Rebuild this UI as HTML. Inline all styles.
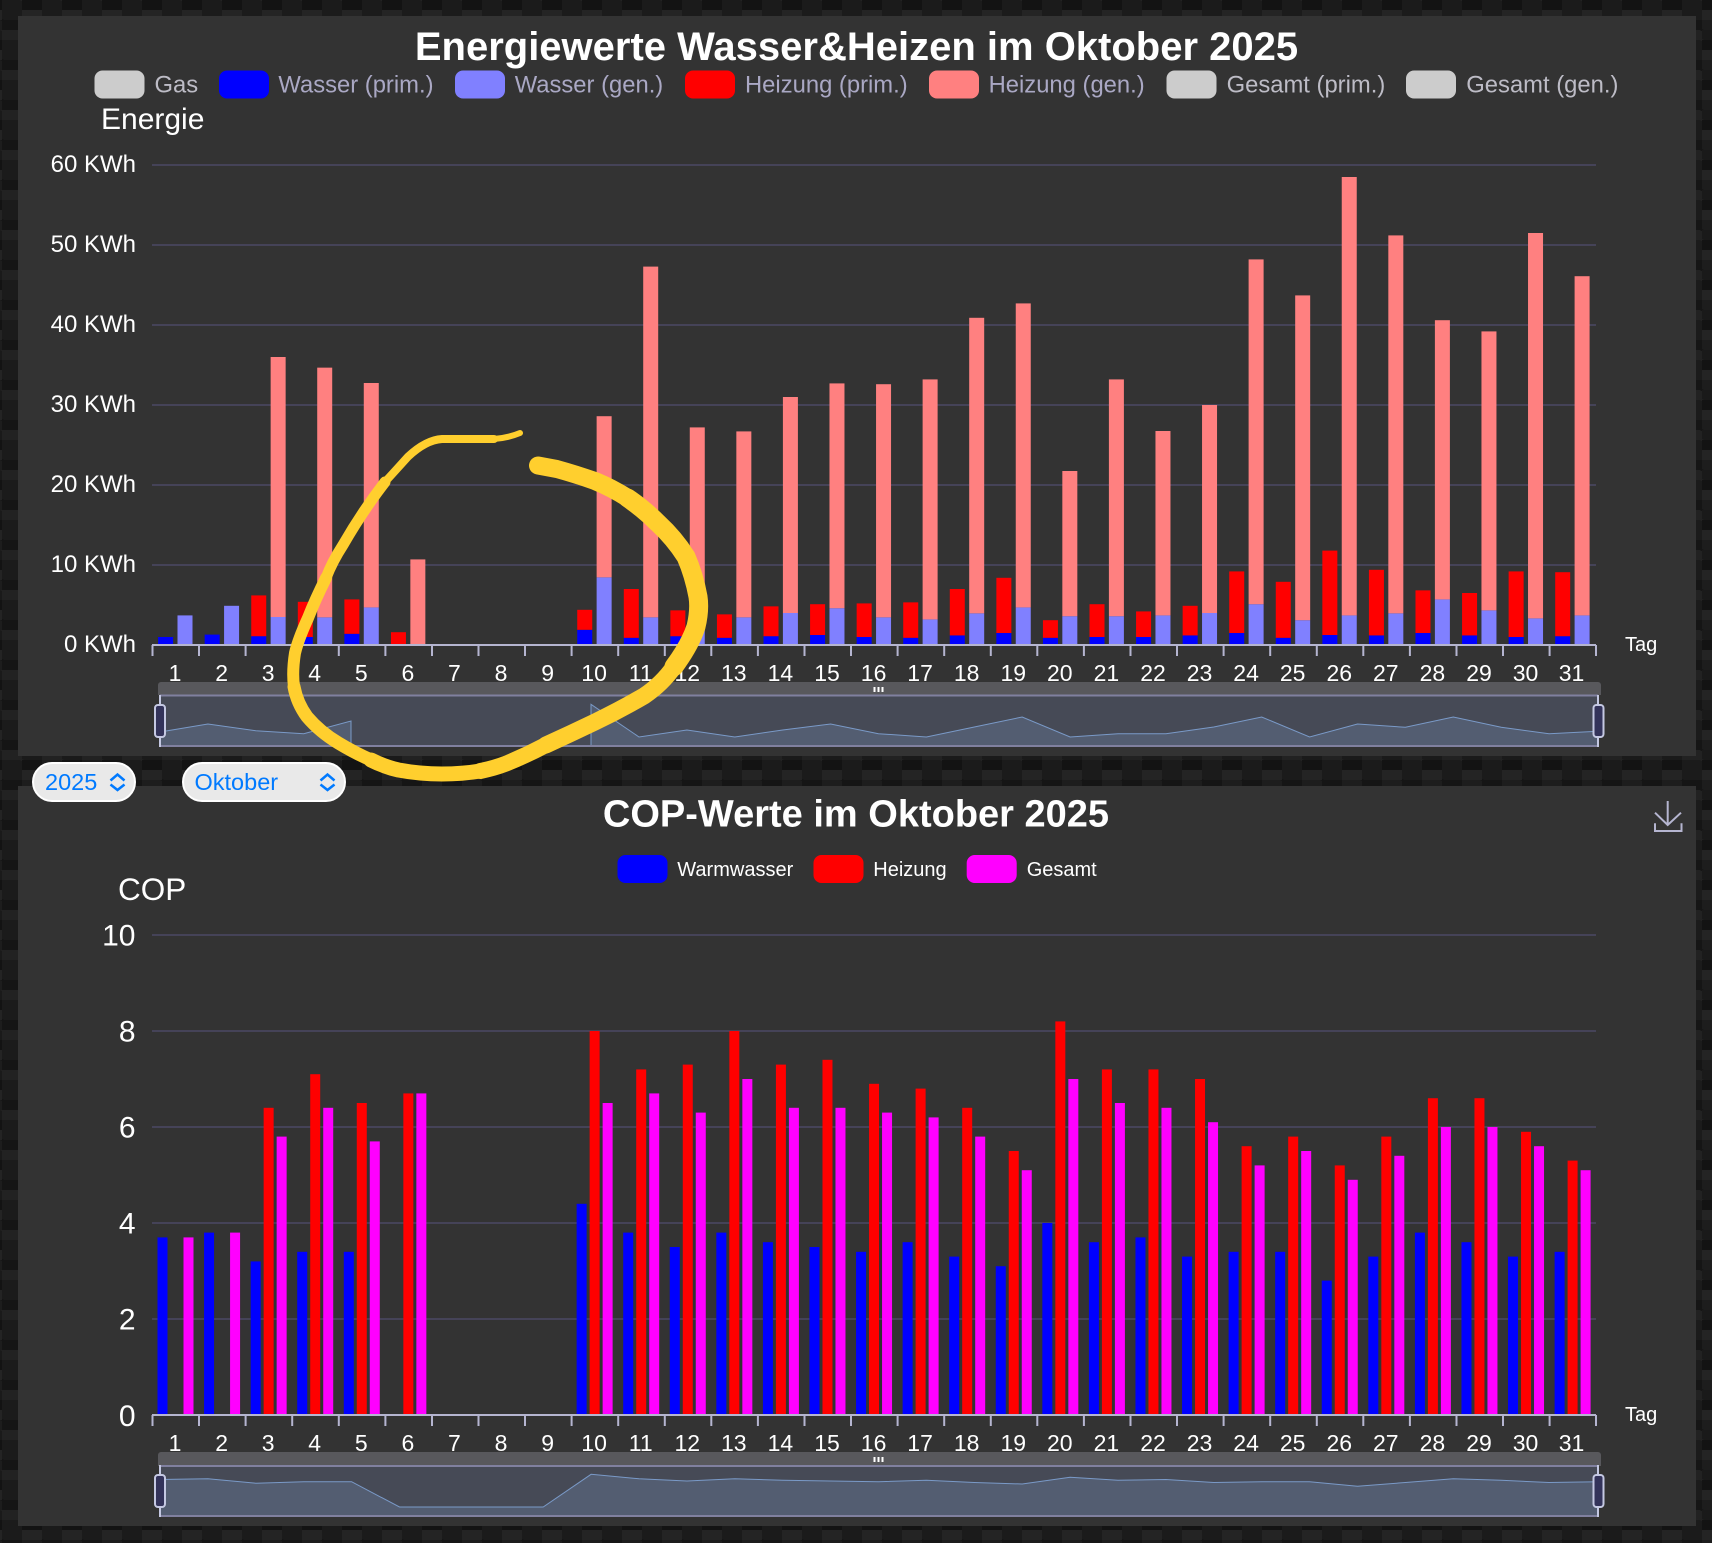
<!DOCTYPE html>
<html><head><meta charset="utf-8"><title>Energiewerte</title>
<style>
html,body{margin:0;padding:0;width:1712px;height:1543px;overflow:hidden}
body{background:
linear-gradient(27deg,#151515 10px,transparent 10px) 2px 30px,
linear-gradient(207deg,#151515 10px,transparent 10px) 22px 20px,
linear-gradient(27deg,#222 10px,transparent 10px) 2px 40px,
linear-gradient(207deg,#222 10px,transparent 10px) 22px 30px,
linear-gradient(90deg,#1b1b1b 20px,transparent 20px) 2px 20px,
linear-gradient(#1d1d1d 25%,#1a1a1a 25%,#1a1a1a 50%,transparent 50%,transparent 75%,#242424 75%,#242424) 2px 20px;
background-color:#131313;background-size:40px 40px}
svg{position:absolute;left:0;top:0;display:block}
text{font-family:"Liberation Sans",sans-serif;fill:#fff}
.a{x:5.6px;width:15px}.c{x:25px;width:15px}
.b{fill:#00f}.e{fill:#f00}.f{fill:#8080ff}.g{fill:#ff8080}
.p{x:5px;width:10px;fill:#00f}.q{x:18px;width:10px;fill:#f00}.t{x:31px;width:10px;fill:#f0f}
.grid{stroke:#454358;stroke-width:2;fill:none}
.axis{stroke:#b5b5d0;stroke-width:2;fill:none}
.lg{font-size:23.8px;fill:#aaa8c4}
.lw{font-size:23.8px;fill:#bdbcc6}
.yl{font-size:24px;text-anchor:end}
.yc{font-size:30px;text-anchor:end}
.xl text{font-size:23px;text-anchor:middle}
.sel{font-size:23.5px;fill:#007aff}
.chev{fill:none;stroke:#007aff;stroke-width:2.5}
.sc{fill:none;stroke:#ffcf2e;stroke-linecap:round;stroke-linejoin:round}
</style></head><body>
<svg width="1712" height="1543" viewBox="0 0 1712 1543" xmlns="http://www.w3.org/2000/svg">
<rect x="18" y="16" width="1678" height="740" fill="#333"/>
<rect x="18" y="786" width="1678" height="740" fill="#333"/>

<text x="856.5" y="60" font-size="40" font-weight="bold" text-anchor="middle">Energiewerte Wasser&amp;Heizen im Oktober 2025</text>
<rect x="94.5" y="70.5" width="50" height="28" rx="8" fill="#ccc"/><text class="lw" x="154.5" y="92.5">Gas</text>
<rect x="219" y="70.5" width="50" height="28" rx="8" fill="#00f"/><text class="lg" x="278.4" y="92.5">Wasser (prim.)</text>
<rect x="455" y="70.5" width="50" height="28" rx="8" fill="#8080ff"/><text class="lg" x="514.7" y="92.5">Wasser (gen.)</text>
<rect x="685" y="70.5" width="50" height="28" rx="8" fill="#f00"/><text class="lg" x="745" y="92.5">Heizung (prim.)</text>
<rect x="929" y="70.5" width="50" height="28" rx="8" fill="#ff8080"/><text class="lg" x="988.6" y="92.5">Heizung (gen.)</text>
<rect x="1166.5" y="70.5" width="50" height="28" rx="8" fill="#ccc"/><text class="lw" x="1226.6" y="92.5">Gesamt (prim.)</text>
<rect x="1406" y="70.5" width="50" height="28" rx="8" fill="#ccc"/><text class="lw" x="1466.3" y="92.5">Gesamt (gen.)</text>
<text x="101" y="129" font-size="30">Energie</text>

<path class="grid" d="M152 165H1596M152 245H1596M152 325H1596M152 405H1596M152 485H1596M152 565H1596"/>
<text class="yl" x="136" y="172">60 KWh</text>
<text class="yl" x="136" y="252">50 KWh</text>
<text class="yl" x="136" y="332">40 KWh</text>
<text class="yl" x="136" y="412">30 KWh</text>
<text class="yl" x="136" y="492">20 KWh</text>
<text class="yl" x="136" y="572">10 KWh</text>
<text class="yl" x="136" y="652">0 KWh</text>

<g transform="translate(0,645) scale(1,-8)">
<g transform="translate(152.5)"><rect class="a b" height="1"/><rect class="c f" height="3.7"/></g>
<g transform="translate(199.07)"><rect class="a b" height="1.3"/><rect class="c f" height="4.9"/></g>
<g transform="translate(245.64)"><rect class="a b" height="1.1"/><rect class="a e" y="1.1" height="5.1"/><rect class="c f" height="3.5"/><rect class="c g" y="3.5" height="32.5"/></g>
<g transform="translate(292.21)"><rect class="a b" height="1"/><rect class="a e" y="1" height="4.4"/><rect class="c f" height="3.46"/><rect class="c g" y="3.46" height="31.21"/></g>
<g transform="translate(338.78)"><rect class="a b" height="1.4"/><rect class="a e" y="1.4" height="4.3"/><rect class="c f" height="4.7"/><rect class="c g" y="4.7" height="28.05"/></g>
<g transform="translate(385.35)"><rect class="a e" height="1.6"/><rect class="c g" height="10.7"/></g>
<g transform="translate(571.63)"><rect class="a b" height="1.9"/><rect class="a e" y="1.9" height="2.5"/><rect class="c f" height="8.46"/><rect class="c g" y="8.46" height="20.14"/></g>
<g transform="translate(618.2)"><rect class="a b" height=".9"/><rect class="a e" y=".9" height="6.1"/><rect class="c f" height="3.46"/><rect class="c g" y="3.46" height="43.84"/></g>
<g transform="translate(664.77)"><rect class="a b" height="1.1"/><rect class="a e" y="1.1" height="3.23"/><rect class="c f" height="3.8"/><rect class="c g" y="3.8" height="23.4"/></g>
<g transform="translate(711.34)"><rect class="a b" height=".9"/><rect class="a e" y=".9" height="2.93"/><rect class="c f" height="3.46"/><rect class="c g" y="3.46" height="23.24"/></g>
<g transform="translate(757.91)"><rect class="a b" height="1.1"/><rect class="a e" y="1.1" height="3.73"/><rect class="c f" height="4"/><rect class="c g" y="4" height="27"/></g>
<g transform="translate(804.48)"><rect class="a b" height="1.25"/><rect class="a e" y="1.25" height="3.85"/><rect class="c f" height="4.6"/><rect class="c g" y="4.6" height="28.1"/></g>
<g transform="translate(851.05)"><rect class="a b" height="1"/><rect class="a e" y="1" height="4.2"/><rect class="c f" height="3.46"/><rect class="c g" y="3.46" height="29.14"/></g>
<g transform="translate(897.62)"><rect class="a b" height=".9"/><rect class="a e" y=".9" height="4.43"/><rect class="c f" height="3.2"/><rect class="c g" y="3.2" height="30"/></g>
<g transform="translate(944.19)"><rect class="a b" height="1.2"/><rect class="a e" y="1.2" height="5.8"/><rect class="c f" height="3.96"/><rect class="c g" y="3.96" height="36.94"/></g>
<g transform="translate(990.76)"><rect class="a b" height="1.5"/><rect class="a e" y="1.5" height="6.9"/><rect class="c f" height="4.7"/><rect class="c g" y="4.7" height="38"/></g>
<g transform="translate(1037.33)"><rect class="a b" height=".9"/><rect class="a e" y=".9" height="2.2"/><rect class="c f" height="3.6"/><rect class="c g" y="3.6" height="18.15"/></g>
<g transform="translate(1083.9)"><rect class="a b" height="1"/><rect class="a e" y="1" height="4.1"/><rect class="c f" height="3.6"/><rect class="c g" y="3.6" height="29.6"/></g>
<g transform="translate(1130.47)"><rect class="a b" height="1"/><rect class="a e" y="1" height="3.2"/><rect class="c f" height="3.7"/><rect class="c g" y="3.7" height="23.05"/></g>
<g transform="translate(1177.04)"><rect class="a b" height="1.2"/><rect class="a e" y="1.2" height="3.7"/><rect class="c f" height="4"/><rect class="c g" y="4" height="26"/></g>
<g transform="translate(1223.61)"><rect class="a b" height="1.5"/><rect class="a e" y="1.5" height="7.7"/><rect class="c f" height="5.1"/><rect class="c g" y="5.1" height="43.1"/></g>
<g transform="translate(1270.18)"><rect class="a b" height=".9"/><rect class="a e" y=".9" height="7"/><rect class="c f" height="3.1"/><rect class="c g" y="3.1" height="40.6"/></g>
<g transform="translate(1316.75)"><rect class="a b" height="1.25"/><rect class="a e" y="1.25" height="10.55"/><rect class="c f" height="3.7"/><rect class="c g" y="3.7" height="54.8"/></g>
<g transform="translate(1363.32)"><rect class="a b" height="1.2"/><rect class="a e" y="1.2" height="8.2"/><rect class="c f" height="3.96"/><rect class="c g" y="3.96" height="47.24"/></g>
<g transform="translate(1409.89)"><rect class="a b" height="1.5"/><rect class="a e" y="1.5" height="5.33"/><rect class="c f" height="5.7"/><rect class="c g" y="5.7" height="34.9"/></g>
<g transform="translate(1456.46)"><rect class="a b" height="1.2"/><rect class="a e" y="1.2" height="5.3"/><rect class="c f" height="4.33"/><rect class="c g" y="4.33" height="34.87"/></g>
<g transform="translate(1503.03)"><rect class="a b" height="1"/><rect class="a e" y="1" height="8.2"/><rect class="c f" height="3.33"/><rect class="c g" y="3.33" height="48.17"/></g>
<g transform="translate(1549.6)"><rect class="a b" height="1.1"/><rect class="a e" y="1.1" height="8"/><rect class="c f" height="3.7"/><rect class="c g" y="3.7" height="42.4"/></g>
</g>

<path class="axis" d="M152 645H1596M152.5 645v11M199 645v11M245.6 645v11M292.2 645v11M338.8 645v11M385.4 645v11M432 645v11M478.5 645v11M525 645v11M571.6 645v11M618.2 645v11M664.8 645v11M711.3 645v11M757.9 645v11M804.5 645v11M851 645v11M897.6 645v11M944.2 645v11M990.8 645v11M1037.3 645v11M1083.9 645v11M1130.5 645v11M1177 645v11M1223.6 645v11M1270.2 645v11M1316.8 645v11M1363.3 645v11M1409.9 645v11M1456.5 645v11M1503 645v11M1549.6 645v11M1596 645v11"/>
<g class="xl">
<text x="175" y="681">1</text><text x="221.6" y="681">2</text><text x="268.1" y="681">3</text><text x="314.7" y="681">4</text><text x="361.3" y="681">5</text><text x="407.9" y="681">6</text><text x="454.4" y="681">7</text><text x="501" y="681">8</text><text x="547.6" y="681">9</text><text x="594.1" y="681">10</text><text x="640.7" y="681">11</text><text x="687.3" y="681">12</text><text x="733.8" y="681">13</text><text x="780.4" y="681">14</text><text x="827" y="681">15</text><text x="873.6" y="681">16</text><text x="920.1" y="681">17</text><text x="966.7" y="681">18</text><text x="1013.3" y="681">19</text><text x="1059.8" y="681">20</text><text x="1106.4" y="681">21</text><text x="1153" y="681">22</text><text x="1199.5" y="681">23</text><text x="1246.1" y="681">24</text><text x="1292.7" y="681">25</text><text x="1339.3" y="681">26</text><text x="1385.8" y="681">27</text><text x="1432.4" y="681">28</text><text x="1479" y="681">29</text><text x="1525.5" y="681">30</text><text x="1571.5" y="681">31</text>
</g>
<text x="1625" y="651" font-size="20">Tag</text>

<path d="M158 695V685a3 3 0 0 1 3-3H1598a3 3 0 0 1 3 3V695Z" fill="#58585c"/>
<rect x="160" y="695" width="1438" height="51" fill="#464a56"/>
<path d="M160 746V732L207.9 724L255.8 730.7L303.7 733.7L351 721V746Z" fill="#535d71"/>
<path d="M591 746V704.3L639 737L686.9 730L734.8 737L782.7 730L830.6 724L878.5 733.7L926.4 737L974.3 727L1022.2 717L1070.1 737L1118 733.7L1165.9 733.7L1213.8 727L1261.7 717L1309.6 737L1357.5 724L1405.4 727.3L1453.3 717L1501.2 727.3L1549.1 733.7L1598 731.3V746Z" fill="#535d71"/>
<path d="M160 732L207.9 724L255.8 730.7L303.7 733.7L351 721V746M591 746V704.3L639 737L686.9 730L734.8 737L782.7 730L830.6 724L878.5 733.7L926.4 737L974.3 727L1022.2 717L1070.1 737L1118 733.7L1165.9 733.7L1213.8 727L1261.7 717L1309.6 737L1357.5 724L1405.4 727.3L1453.3 717L1501.2 727.3L1549.1 733.7L1598 731.3" fill="none" stroke="#7a9ac8" stroke-width="1"/>
<path d="M160 695.5H1598M160 746H1598" stroke="#80809f" stroke-width="2" fill="none"/>
<path d="M874.5 687v5M878.5 687v5M882.5 687v5" stroke="#fff" stroke-width="2" fill="none"/>
<path d="M160 695V747M1598 695V747" stroke="#c4c8e2" stroke-width="2" fill="none"/>
<rect x="155" y="705" width="10" height="32" rx="3" fill="#33335a" stroke="#c4c8e2" stroke-width="2"/>
<rect x="1593.5" y="705" width="10" height="32" rx="3" fill="#33335a" stroke="#c4c8e2" stroke-width="2"/>

<text x="856" y="826.7" font-size="38" font-weight="bold" text-anchor="middle">COP-Werte im Oktober 2025</text>
<rect x="617.5" y="855" width="50" height="28" rx="8" fill="#00f"/><text x="677.3" y="876" font-size="20">Warmwasser</text>
<rect x="813.5" y="855" width="50" height="28" rx="8" fill="#f00"/><text x="873.3" y="876" font-size="20">Heizung</text>
<rect x="966.7" y="855" width="50" height="28" rx="8" fill="#f0f"/><text x="1026.7" y="876" font-size="20">Gesamt</text>
<text x="118" y="900" font-size="31.5">COP</text>

<path class="grid" d="M152 935H1596M152 1031H1596M152 1127H1596M152 1223H1596M152 1319H1596"/>
<text class="yc" x="135.5" y="945.5">10</text>
<text class="yc" x="135.5" y="1041.5">8</text>
<text class="yc" x="135.5" y="1137.5">6</text>
<text class="yc" x="135.5" y="1233.5">4</text>
<text class="yc" x="135.5" y="1329.5">2</text>
<text class="yc" x="135.5" y="1426">0</text>

<g transform="translate(0,1415) scale(1,-48)">
<g transform="translate(152.5)"><rect class="p" height="3.7"/><rect class="t" height="3.7"/></g>
<g transform="translate(199.07)"><rect class="p" height="3.8"/><rect class="t" height="3.8"/></g>
<g transform="translate(245.64)"><rect class="p" height="3.2"/><rect class="q" height="6.4"/><rect class="t" height="5.8"/></g>
<g transform="translate(292.21)"><rect class="p" height="3.4"/><rect class="q" height="7.1"/><rect class="t" height="6.4"/></g>
<g transform="translate(338.78)"><rect class="p" height="3.4"/><rect class="q" height="6.5"/><rect class="t" height="5.7"/></g>
<g transform="translate(385.35)"><rect class="q" height="6.7"/><rect class="t" height="6.7"/></g>
<g transform="translate(571.63)"><rect class="p" height="4.4"/><rect class="q" height="8"/><rect class="t" height="6.5"/></g>
<g transform="translate(618.2)"><rect class="p" height="3.8"/><rect class="q" height="7.2"/><rect class="t" height="6.7"/></g>
<g transform="translate(664.77)"><rect class="p" height="3.5"/><rect class="q" height="7.3"/><rect class="t" height="6.3"/></g>
<g transform="translate(711.34)"><rect class="p" height="3.8"/><rect class="q" height="8"/><rect class="t" height="7"/></g>
<g transform="translate(757.91)"><rect class="p" height="3.6"/><rect class="q" height="7.3"/><rect class="t" height="6.4"/></g>
<g transform="translate(804.48)"><rect class="p" height="3.5"/><rect class="q" height="7.4"/><rect class="t" height="6.4"/></g>
<g transform="translate(851.05)"><rect class="p" height="3.4"/><rect class="q" height="6.9"/><rect class="t" height="6.3"/></g>
<g transform="translate(897.62)"><rect class="p" height="3.6"/><rect class="q" height="6.8"/><rect class="t" height="6.2"/></g>
<g transform="translate(944.19)"><rect class="p" height="3.3"/><rect class="q" height="6.4"/><rect class="t" height="5.8"/></g>
<g transform="translate(990.76)"><rect class="p" height="3.1"/><rect class="q" height="5.5"/><rect class="t" height="5.1"/></g>
<g transform="translate(1037.33)"><rect class="p" height="4"/><rect class="q" height="8.2"/><rect class="t" height="7"/></g>
<g transform="translate(1083.9)"><rect class="p" height="3.6"/><rect class="q" height="7.2"/><rect class="t" height="6.5"/></g>
<g transform="translate(1130.47)"><rect class="p" height="3.7"/><rect class="q" height="7.2"/><rect class="t" height="6.4"/></g>
<g transform="translate(1177.04)"><rect class="p" height="3.3"/><rect class="q" height="7"/><rect class="t" height="6.1"/></g>
<g transform="translate(1223.61)"><rect class="p" height="3.4"/><rect class="q" height="5.6"/><rect class="t" height="5.2"/></g>
<g transform="translate(1270.18)"><rect class="p" height="3.4"/><rect class="q" height="5.8"/><rect class="t" height="5.5"/></g>
<g transform="translate(1316.75)"><rect class="p" height="2.8"/><rect class="q" height="5.2"/><rect class="t" height="4.9"/></g>
<g transform="translate(1363.32)"><rect class="p" height="3.3"/><rect class="q" height="5.8"/><rect class="t" height="5.4"/></g>
<g transform="translate(1409.89)"><rect class="p" height="3.8"/><rect class="q" height="6.6"/><rect class="t" height="6"/></g>
<g transform="translate(1456.46)"><rect class="p" height="3.6"/><rect class="q" height="6.6"/><rect class="t" height="6"/></g>
<g transform="translate(1503.03)"><rect class="p" height="3.3"/><rect class="q" height="5.9"/><rect class="t" height="5.6"/></g>
<g transform="translate(1549.6)"><rect class="p" height="3.4"/><rect class="q" height="5.3"/><rect class="t" height="5.1"/></g>
</g>

<path class="axis" d="M152 1415H1596M152.5 1415v11M199 1415v11M245.6 1415v11M292.2 1415v11M338.8 1415v11M385.4 1415v11M432 1415v11M478.5 1415v11M525 1415v11M571.6 1415v11M618.2 1415v11M664.8 1415v11M711.3 1415v11M757.9 1415v11M804.5 1415v11M851 1415v11M897.6 1415v11M944.2 1415v11M990.8 1415v11M1037.3 1415v11M1083.9 1415v11M1130.5 1415v11M1177 1415v11M1223.6 1415v11M1270.2 1415v11M1316.8 1415v11M1363.3 1415v11M1409.9 1415v11M1456.5 1415v11M1503 1415v11M1549.6 1415v11M1596 1415v11"/>
<g class="xl">
<text x="175" y="1451">1</text><text x="221.6" y="1451">2</text><text x="268.1" y="1451">3</text><text x="314.7" y="1451">4</text><text x="361.3" y="1451">5</text><text x="407.9" y="1451">6</text><text x="454.4" y="1451">7</text><text x="501" y="1451">8</text><text x="547.6" y="1451">9</text><text x="594.1" y="1451">10</text><text x="640.7" y="1451">11</text><text x="687.3" y="1451">12</text><text x="733.8" y="1451">13</text><text x="780.4" y="1451">14</text><text x="827" y="1451">15</text><text x="873.6" y="1451">16</text><text x="920.1" y="1451">17</text><text x="966.7" y="1451">18</text><text x="1013.3" y="1451">19</text><text x="1059.8" y="1451">20</text><text x="1106.4" y="1451">21</text><text x="1153" y="1451">22</text><text x="1199.5" y="1451">23</text><text x="1246.1" y="1451">24</text><text x="1292.7" y="1451">25</text><text x="1339.3" y="1451">26</text><text x="1385.8" y="1451">27</text><text x="1432.4" y="1451">28</text><text x="1479" y="1451">29</text><text x="1525.5" y="1451">30</text><text x="1571.5" y="1451">31</text>
</g>
<text x="1625" y="1421" font-size="20">Tag</text>

<path d="M158 1466V1455a3 3 0 0 1 3-3H1598a3 3 0 0 1 3 3V1466Z" fill="#58585c"/>
<rect x="160" y="1466" width="1438" height="50" fill="#464a56"/>
<path d="M160 1516V1479.5L207.9 1478.8L255.8 1483.2L303.7 1481.7L351.6 1481.7L399.5 1507L447.4 1507L495.3 1507L543.2 1507L591.1 1474.3L639 1478.8L686.9 1481L734.8 1478.8L782.7 1480.3L830.6 1481L878.5 1481.7L926.4 1480.3L974.3 1482.5L1022.2 1484L1070.1 1477.3L1118 1480.3L1165.9 1479.5L1213.8 1482.5L1261.7 1481.7L1309.6 1481.7L1357.5 1486.2L1405.4 1482.5L1453.3 1478.8L1501.2 1480.3L1549.1 1482.5L1598 1481.7V1516Z" fill="#535d71"/>
<path d="M160 1479.5L207.9 1478.8L255.8 1483.2L303.7 1481.7L351.6 1481.7L399.5 1507L447.4 1507L495.3 1507L543.2 1507L591.1 1474.3L639 1478.8L686.9 1481L734.8 1478.8L782.7 1480.3L830.6 1481L878.5 1481.7L926.4 1480.3L974.3 1482.5L1022.2 1484L1070.1 1477.3L1118 1480.3L1165.9 1479.5L1213.8 1482.5L1261.7 1481.7L1309.6 1481.7L1357.5 1486.2L1405.4 1482.5L1453.3 1478.8L1501.2 1480.3L1549.1 1482.5L1598 1481.7" fill="none" stroke="#7a9ac8" stroke-width="1"/>
<path d="M160 1466H1598M160 1516H1598" stroke="#80809f" stroke-width="2" fill="none"/>
<path d="M874.5 1457v5M878.5 1457v5M882.5 1457v5" stroke="#fff" stroke-width="2" fill="none"/>
<path d="M160 1465V1517M1598 1465V1517" stroke="#c4c8e2" stroke-width="2" fill="none"/>
<rect x="155" y="1475" width="10" height="32" rx="3" fill="#33335a" stroke="#c4c8e2" stroke-width="2"/>
<rect x="1593.5" y="1475" width="10" height="32" rx="3" fill="#33335a" stroke="#c4c8e2" stroke-width="2"/>

<path d="M1667.7 801V825M1655 812.7L1667.7 825L1681 812.7M1655 823.3V831H1681.5V823.3" fill="none" stroke="#b5b5d0" stroke-width="2"/>

<rect x="33" y="763" width="102" height="38" rx="19" fill="#e9e9e9" stroke="#fff" stroke-width="2"/>
<text class="sel" x="45" y="790">2025</text>
<path class="chev" d="M110.5 780.5L117.5 774.5L124.5 780.5M110.5 784.5L117.5 790L124.5 784.5"/>
<rect x="183" y="763" width="162" height="38" rx="19" fill="#e9e9e9" stroke="#fff" stroke-width="2"/>
<text class="sel" x="194.5" y="790">Oktober</text>
<path class="chev" d="M320.5 780.5L327.5 774.5L334.5 780.5M320.5 784.5L327.5 790L334.5 784.5"/>

<path class="sc" stroke-width="6" d="M520 433Q508 438 494 439"/>
<path class="sc" stroke-width="8" d="M494 439Q470 439 442 439Q425.8 440 408 456.7Q396 470 385 482"/>
<path class="sc" stroke-width="11" d="M385 482Q362 512 343 545Q332 562 326 578"/>
<path class="sc" stroke-width="12" d="M326 578Q315 600 308 618Q298 640 295 653Q292 672 294 686.7"/>
<path class="sc" stroke-width="13" d="M294 686.7Q297 703 307 716.7Q320 732 338.4 743Q355 753 371 760"/>
<path class="sc" stroke-width="15" d="M371 760Q385 767 398.5 770Q420 774 442 774Q462 774 480.3 771"/>
<path class="sc" stroke-width="16" d="M480.3 771Q495 768 507.6 763Q527 755 545.9 745"/>
<path class="sc" stroke-width="17" d="M545.9 745Q570 734 595 722Q620 710 644 696Q662 684 674 666.7"/>
<path class="sc" stroke-width="19" d="M674 666.7Q690 645 696 626.7Q700 610 698 596.7Q694 575 686 556.7Q674 538 658 523.3Q645 510 627.7 498"/>
<path class="sc" stroke-width="18" d="M627.7 498Q612 488 595 481Q575 474 556.8 469Q546 467 538 465.5"/>
</svg>
</body></html>
